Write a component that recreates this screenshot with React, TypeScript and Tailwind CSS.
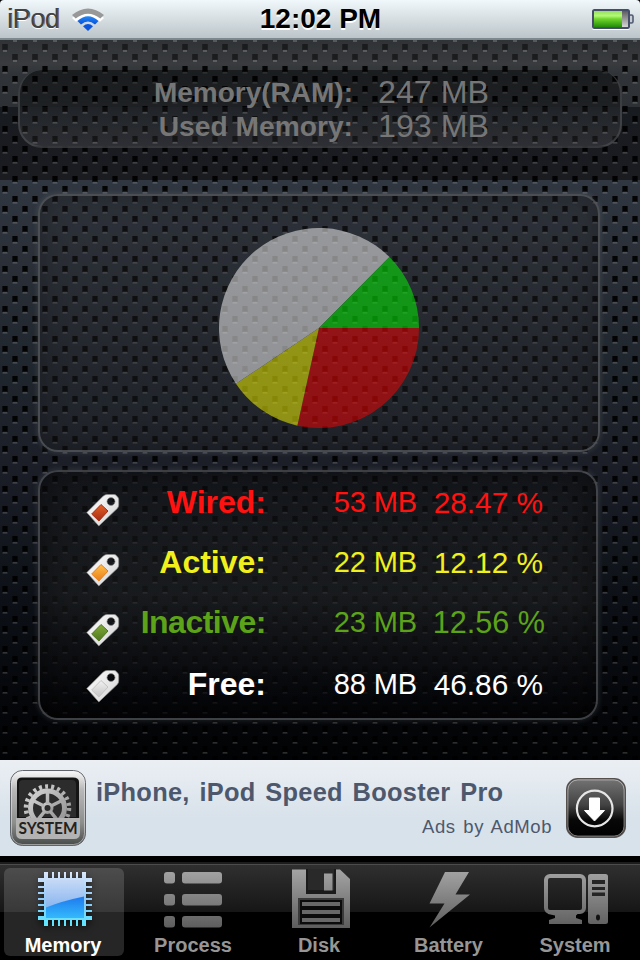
import type { ReactNode } from 'react';

interface Segment {
  name: string;
  size: string;
  percent: string;
  share: number;
  pie: string;
  text: string;
  tag: [string, string];
  rowClass: string;
  iconClass: string;
  nameClass: string;
  percentClass: string;
}

const segments: Segment[] = [
  {
    name: 'Wired:',
    size: '53 MB',
    percent: '28.47 %',
    share: 28.47,
    pie: '#ff0000',
    text: 'text-[#ff120f]',
    tag: ['#e2622a', '#a82a10'],
    rowClass: 'h-[60px]',
    iconClass: 'mt-[14px]',
    nameClass: '',
    percentClass: 'w-[126px] mt-px text-[29.8px]',
  },
  {
    name: 'Active:',
    size: '22 MB',
    percent: '12.12 %',
    share: 12.12,
    pie: '#ffff00',
    text: 'text-[#f0f01c]',
    tag: ['#ffc04a', '#e87c18'],
    rowClass: 'h-[60px]',
    iconClass: 'mt-[14px]',
    nameClass: '',
    percentClass: 'w-[126px] mt-px text-[29.8px]',
  },
  {
    name: 'Inactive:',
    size: '23 MB',
    percent: '12.56 %',
    share: 12.56,
    pie: '#00ff00',
    text: 'text-[#5da31a]',
    tag: ['#82ab3c', '#4f761c'],
    rowClass: 'h-[62px]',
    iconClass: 'mt-[14px]',
    nameClass: 'tracking-[-0.5px]',
    percentClass: 'w-[128px] text-[30.6px]',
  },
  {
    name: 'Free:',
    size: '88 MB',
    percent: '46.86 %',
    share: 46.86,
    pie: '#ffffff',
    text: 'text-white',
    tag: ['#f2f2f2', '#c4c4c4'],
    rowClass: 'h-[60px]',
    iconClass: 'mt-[8px]',
    nameClass: '',
    percentClass: 'w-[126px] mt-px text-[29.8px]',
  },
];

// Slices run clockwise from 3 o'clock
const pieOrder = [segments[0], segments[1], segments[3], segments[2]];

function PieChart() {
  let angle = 0;
  const point = (a: number) => `${100 + 100 * Math.cos(a)} ${100 + 100 * Math.sin(a)}`;

  return (
    <svg width="200" height="200" viewBox="0 0 200 200" className="opacity-50">
      {pieOrder.map((s) => {
        const start = angle;
        angle += (s.share / 100) * Math.PI * 2;
        return <path key={s.name} d={`M100 100L${point(start)}A100 100 0 0 1 ${point(angle)}Z`} fill={s.pie} />;
      })}
    </svg>
  );
}

/* Perforated metal backdrop */
function Perforation() {
  return (
    <svg className="absolute inset-0" width="640" height="720">
      <defs>
        <g id="hole">
          <rect x="0" y="6" width="6" height="2" fill="#fff" opacity=".05" />
          <rect x="1" y="6" width="4" height="1.500" fill="#fff" opacity=".12" />
          <rect width="6" height="6" fill="#000" opacity=".6" />
          <rect x="1" width="4" height="5" fill="#000" opacity=".8" />
        </g>
        <g id="hole-top">
          <rect x="1" y="6" width="4" height="2" fill="#fff" opacity=".18" />
          <rect width="6" height="6" fill="#121314" opacity=".6" />
          <rect x="1" width="4" height="5" fill="#18191a" opacity=".7" />
        </g>
        <pattern id="holes" width="20" height="20" x="0" y="26" patternUnits="userSpaceOnUse">
          <use href="#hole" x="2" y="0" />
          <use href="#hole" x="12" y="10" />
        </pattern>
        <pattern id="holes-top" width="20" height="20" x="0" y="4" patternUnits="userSpaceOnUse">
          <use href="#hole-top" x="2" y="0" />
          <use href="#hole-top" x="12" y="10" />
        </pattern>
      </defs>
      <rect width="640" height="24" fill="url(#holes-top)" />
      <rect y="26" width="640" height="694" fill="url(#holes)" />
    </svg>
  );
}

function StatusBar() {
  return (
    <header className="h-10 bg-black">
      <div className="h-10 rounded-t-[4px] border-b-2 border-[#7d888e] bg-linear-to-b from-[#f1f8fc] to-[#bcc5c9] flex items-center justify-between pl-[7px] pr-[6px]">
        <div className="flex items-center w-[240px]">
          <span className="w-[52px] text-[27px] leading-[38px] tracking-[-0.4px] text-[#434343] [text-shadow:0_1px_0_#fff,0.8px_0_0_#434343]">
            iPod
          </span>
          <svg width="34" height="26" viewBox="0 0 34 26" className="ml-[12px] mt-[2px]">
            <defs>
              <linearGradient id="wifi" x1="0" y1="0" x2="0" y2="1">
                <stop offset="0" stopColor="#2388f4" />
                <stop offset="1" stopColor="#0650dc" />
              </linearGradient>
            </defs>
            <path d="M1 9.500Q17-5 33 9.500L29 13.300Q17 2.500 5 13.300Z" fill="#fff" transform="translate(0 1.500)" />
            <path d="M1 8Q17-5 33 8L29.300 11.500Q17 2 4.700 11.500Z" fill="#989898" />
            <path d="M6.500 14Q17 4.500 27.500 14L24 17.500Q17 11.500 10 17.500Z" fill="url(#wifi)" />
            <path d="M12 19.200Q17 15 22 19.200L17 24Z" fill="#0b55dc" />
          </svg>
        </div>
        <span className="w-[150px] text-center font-bold text-[28px] leading-[38px] text-black whitespace-nowrap [text-shadow:0_1.5px_0_#fff]">
          12:02 PM
        </span>
        <div className="flex justify-end w-[240px]">
          <svg width="42" height="22" viewBox="0 0 42 22">
            <defs>
              <linearGradient id="charge" x1="0" y1="0" x2="0" y2="1">
                <stop offset="0" stopColor="#93df5c" />
                <stop offset=".3" stopColor="#b4fa78" />
                <stop offset=".5" stopColor="#6fd52c" />
                <stop offset="1" stopColor="#238c08" />
              </linearGradient>
              <linearGradient id="drained" x1="0" y1="0" x2="0" y2="1">
                <stop offset="0" stopColor="#555" />
                <stop offset="1" stopColor="#ddd" />
              </linearGradient>
            </defs>
            <rect x="0" y="2" width="38" height="20" rx="2" fill="#fff" />
            <rect x="37" y="7" width="4" height="8" rx="1.500" fill="#c8ced6" stroke="#515b70" strokeWidth="1.600" />
            <rect x="1" y="2" width="36" height="18" rx="1.500" fill="url(#drained)" stroke="#454e69" strokeWidth="2" />
            <rect x="2" y="3" width="28" height="16" fill="url(#charge)" />
          </svg>
        </div>
      </div>
    </header>
  );
}

function TagIcon({ id, colors, className }: { id: string; colors: [string, string]; className: string }) {
  return (
    <svg width="34" height="34" viewBox="0 0 34 34" className={className}>
      <defs>
        <linearGradient id={`tag-${id}`} x1="0" y1="0" x2="0" y2="1">
          <stop offset="0" stopColor={colors[0]} />
          <stop offset="1" stopColor={colors[1]} />
        </linearGradient>
        <linearGradient id={`paper-${id}`} x1="0" y1="0" x2="1" y2="1">
          <stop offset="0" stopColor="#fff" />
          <stop offset="1" stopColor="#d2d2d2" />
        </linearGradient>
      </defs>
      <path
        fillRule="evenodd"
        d="M.8 18.500L17.300 2Q19 .5 21 .5H28Q29.500.5 30.500 1.700L32 3.400Q32.700 4.200 32.700 5.500V11Q32.700 13 31.300 14.400L12.800 32ZM25 3.500a4 4 0 1 0 .01 0Z"
        fill={`url(#paper-${id})`}
        stroke="#8d8d8d"
        strokeWidth=".7"
      />
      <path d="M15 10.500L22 17L12.900 27L5.700 20Z" fill={`url(#tag-${id})`} stroke={colors[1]} strokeWidth="1" strokeLinejoin="round" />
    </svg>
  );
}

function SystemAppIcon() {
  return (
    <svg width="76" height="76" viewBox="0 0 76 76">
      <defs>
        <linearGradient id="frame" x1="0" y1="0" x2="0" y2="1">
          <stop offset="0" stopColor="#fafafa" />
          <stop offset=".25" stopColor="#b9b9b9" />
          <stop offset=".7" stopColor="#8c8e8c" />
          <stop offset="1" stopColor="#464a48" />
        </linearGradient>
        <linearGradient id="gear" x1="0" y1="0" x2="1" y2="1">
          <stop offset="0" stopColor="#d4d4d4" />
          <stop offset="1" stopColor="#8f8f8f" />
        </linearGradient>
        <clipPath id="window">
          <path d="M9 12Q9 8 13 8H63Q67 8 67 12V48H9Z" />
        </clipPath>
      </defs>
      <rect x=".5" y=".5" width="75" height="75" rx="12" fill="url(#frame)" stroke="#60636a" />
      <rect x="1.500" y="1.500" width="73" height="73" rx="11" fill="none" stroke="#eee" strokeOpacity=".5" />
      <path d="M7 12Q7 7.500 12 7.500H63Q69 7.500 69 12V48H7Z" fill="#141414" />
      <path d="M9 14Q9 10 13 10H62Q66 10 66 14V47H9Z" fill="#2c2c2c" />
      <g clipPath="url(#window)" fill="none" stroke="url(#gear)">
        <circle cx="37.500" cy="38" r="21.500" strokeWidth="4.500" strokeDasharray="3 3.140" />
        <circle cx="37.500" cy="38" r="17" strokeWidth="5" />
        <circle cx="37.500" cy="38" r="4.500" strokeWidth="3" />
        <path d="M37.500 34V21M34 36L22 30M41 36L53 30M35 41L26 52M40 41L49 52" strokeWidth="3.500" />
      </g>
      <path d="M6 48H70V63Q70 69 64 69H12Q6 69 6 63Z" fill="#b3b3b3" />
      <text
        x="38"
        y="64"
        textAnchor="middle"
        textLength="59"
        lengthAdjust="spacingAndGlyphs"
        fontSize="17.500"
        fontFamily="Lato, 'Open Sans', sans-serif"
        fontWeight="bold"
        fill="#222"
      >
        SYSTEM
      </text>
    </svg>
  );
}

function DownloadIcon() {
  return (
    <svg width="60" height="60" viewBox="0 0 60 60">
      <defs>
        <linearGradient id="download" x1="0" y1="0" x2="0" y2="1">
          <stop offset="0" stopColor="#747474" />
          <stop offset=".45" stopColor="#424242" />
          <stop offset=".7" stopColor="#080808" />
          <stop offset="1" stopColor="#000" />
        </linearGradient>
      </defs>
      <rect x=".7" y=".7" width="58.600" height="58.600" rx="11" fill="url(#download)" stroke="#55504e" strokeWidth="1.400" />
      <rect x="1.900" y="1.900" width="56.200" height="56.200" rx="10" fill="none" stroke="#ddd" strokeOpacity=".65" strokeWidth=".9" />
      <circle cx="28.700" cy="30.500" r="17.800" fill="none" stroke="#e6e6e6" strokeWidth="2.200" />
      <path d="M23.500 20H33.500V32.500H38.500L28.500 43L18.500 32.500H23.500Z" fill="#fff" stroke="#fff" strokeLinejoin="round" />
    </svg>
  );
}

function AdBanner() {
  return (
    <a className="h-24 shrink-0 flex bg-linear-to-b from-[#ebeff4] to-[#d8e2ea] to-60% text-[#4d586d]">
      <div className="pl-[10px] pt-[10px]">
        <SystemAppIcon />
      </div>
      <div className="w-[466px] pl-[10px] pt-[16px]">
        <p className="font-bold text-[25.4px] leading-8 tracking-[0.28px] [word-spacing:2.4px] whitespace-nowrap">iPhone, iPod Speed Booster Pro</p>
        <p className="text-right text-[18.5px] leading-6 mt-[7px] tracking-[0.55px] [word-spacing:2px]">Ads by AdMob</p>
      </div>
      <div className="pl-[14px] pt-[18px]">
        <DownloadIcon />
      </div>
    </a>
  );
}

// Offset and width of each pin along one side of the chip
const pins = [
  [0, 4],
  [8, 2],
  [14, 2],
  [20, 2],
  [26, 2],
  [32, 2],
  [38, 4],
];

function ChipIcon() {
  return (
    <svg width="60" height="60" viewBox="34 869 60 60" className="drop-shadow-[0_3px_3px_rgba(0,0,0,0.6)]">
      <defs>
        <linearGradient id="pins" gradientUnits="userSpaceOnUse" x1="0" y1="872" x2="0" y2="926">
          <stop offset="0" stopColor="#dbe8fb" />
          <stop offset=".5" stopColor="#8fc8fa" />
          <stop offset="1" stopColor="#5ce8ff" />
        </linearGradient>
        <linearGradient id="die" x1="0" y1="0" x2="0" y2="1">
          <stop offset="0" stopColor="#c5d9f6" />
          <stop offset="1" stopColor="#72a8ec" />
        </linearGradient>
        <linearGradient id="die-low" x1="0" y1="0" x2="0" y2="1">
          <stop offset="0" stopColor="#1e79ef" />
          <stop offset="1" stopColor="#34b9fb" />
        </linearGradient>
      </defs>
      <g fill="url(#pins)">
        <rect x="44" y="878" width="42" height="42" />
        {pins.map(([at, w]) => (
          <g key={at}>
            <rect x={44 + at} y="872" width={w} height="6" />
            <rect x={44 + at} y="920" width={w} height="6" />
            <rect x="38" y={878 + at} width="6" height={w} />
            <rect x="86" y={878 + at} width="6" height={w} />
          </g>
        ))}
      </g>
      <rect x="46" y="880" width="38" height="38" fill="url(#die)" />
      <path d="M46 907.500Q62 901 84 896.500V918H46Z" fill="url(#die-low)" />
    </svg>
  );
}

function ProcessIcon() {
  return (
    <svg width="60" height="60" viewBox="162 869 60 60" fill="url(#tab-gray)">
      {[872, 894, 916].map((y) => (
        <g key={y}>
          <rect x="164" y={y} width="11" height="11.500" rx="3" />
          <rect x="182" y={y} width="40" height="11.500" rx="3" />
        </g>
      ))}
    </svg>
  );
}

function DiskIcon() {
  return (
    <svg width="60" height="60" viewBox="290 869 60 60">
      <path d="M292 869.500H340L350 879V928H292Z" fill="url(#tab-gray)" />
      <path d="M306 869H336V894H306Z" fill="#1b1b1b" />
      <rect x="308" y="869" width="26" height="21" fill="#292929" />
      <rect x="324" y="873.500" width="8.500" height="17" fill="url(#tab-gray)" />
      <rect x="298" y="898" width="46" height="27" fill="#3a3a3a" />
      <rect x="300" y="900" width="42" height="24" fill="#0b0b0b" />
      <path d="M302 902H340V906H302ZM302 910H340V914H302ZM302 918H340V922H302Z" fill="#686868" />
    </svg>
  );
}

function BoltIcon() {
  return (
    <svg width="60" height="60" viewBox="418 869 60 60">
      <path d="M445 872H469L455.500 894.500H470L429.500 927.500L444.500 903.500H429.500Z" fill="url(#tab-gray)" />
    </svg>
  );
}

function ComputerIcon() {
  return (
    <svg width="68" height="60" viewBox="542 869 68 60">
      <rect x="546" y="876" width="38" height="36" rx="4" fill="none" stroke="url(#tab-gray)" strokeWidth="4" />
      <path d="M548 910H582L576 915.500V918L582 920V924H549V920L555 918V915.500L548 914Z" fill="url(#tab-gray)" />
      <rect x="588" y="874" width="20" height="50" rx="2.500" fill="url(#tab-gray)" />
      <path d="M592 880H605V884H592ZM592 887H605V890H592ZM592 892.500H605V896H592Z" fill="#252525" />
      <ellipse cx="598" cy="917.500" rx="2" ry="3" fill="#111" />
    </svg>
  );
}

interface TabProps {
  label: string;
  active?: boolean;
  labelClass?: string;
  children: ReactNode;
}

function Tab({ label, active = false, labelClass = '', children }: TabProps) {
  return (
    <button
      type="button"
      className={`w-[120px] h-[88px] rounded-[6px] flex flex-col items-center ${active ? 'bg-white/15 text-white' : 'text-[#969696]'}`}
    >
      <span className="h-[60px] mt-px">{children}</span>
      <span className={`font-bold text-[20px] leading-[24px] mt-[4px] ${labelClass}`}>{label}</span>
    </button>
  );
}

function TabBar() {
  return (
    <nav className="h-[98px] mt-[6px] shrink-0 border-t-2 border-[#1c1c1c] bg-[linear-gradient(#4c4c4c_0,#4c4c4c_1.5px,#2f2f2f_1.5px,#161616_48px,#000_48px)]">
      {/* Shared fade for the inactive icons */}
      <svg width="0" height="0" className="absolute">
        <linearGradient id="tab-gray" gradientUnits="userSpaceOnUse" x1="0" y1="869" x2="0" y2="929">
          <stop offset="0" stopColor="#a5a5a5" />
          <stop offset="1" stopColor="#5c5c5c" />
        </linearGradient>
      </svg>
      <div className="flex gap-2 pt-[4px] pl-[4px]">
        <Tab label="Memory" active labelClass="pr-[2px]">
          <ChipIcon />
        </Tab>
        <Tab label="Process" labelClass="pl-[2px]">
          <ProcessIcon />
        </Tab>
        <Tab label="Disk" labelClass="pr-[2px]">
          <DiskIcon />
        </Tab>
        <Tab label="Battery" labelClass="pl-px">
          <BoltIcon />
        </Tab>
        <Tab label="System" labelClass="pr-[2px]">
          <ComputerIcon />
        </Tab>
      </div>
    </nav>
  );
}

function App() {
  return (
    <div className="w-[640px] h-[960px] bg-black flex flex-col overflow-hidden font-['Liberation_Sans',Arial,sans-serif]">
      <StatusBar />

      <main className="relative h-[720px] shrink-0 bg-[linear-gradient(#303336_0,#393b3e_24px,#303438_34px,#2d3135_67px,#181b20_67px,#1b1c20_140px,#303740_140px,#2b3039_210px,#20262d_330px,#1c1f28_420px,#0d1117_560px,#05070b_660px,#020304_720px)]">
        <Perforation />

        <div className="relative pt-[30px]">
          {/* Totals */}
          <section className="ml-[18px] w-[604px] h-[78px] rounded-[24px] border-2 border-t-0 border-[#515356]/60 bg-[linear-gradient(rgba(0,0,0,0.46)_0,rgba(0,0,0,0.32)_37px,rgba(255,255,255,0.04)_37px,rgba(255,255,255,0.09)_100%)] grid grid-cols-[333px_1fr] gap-x-[25px] content-start pt-[5px] text-[#767676]">
            <span className="text-right font-bold text-[28px] leading-[34px] pt-px -mb-px">Memory(RAM):</span>
            <span className="text-[32.2px] leading-[34px]">247 MB</span>
            <span className="text-right font-bold text-[28.2px] leading-[34px]">Used Memory:</span>
            <span className="text-[32.2px] leading-[34px]">193 MB</span>
          </section>

          {/* Usage chart */}
          <section className="ml-[38px] mt-[46px] w-[562px] h-[258px] rounded-[20px] border-2 border-[#54575b]/80 bg-[#2a2c2e]/30 shadow-[0_0_4px_2px_rgba(120,125,130,0.18),inset_0_0_28px_rgba(0,0,0,0.25)] pt-[32px] pl-[179px]">
            <PieChart />
          </section>

          {/* Breakdown */}
          <section className="ml-[38px] mt-[18px] w-[560px] h-[250px] rounded-[20px] border-2 border-[#54575b]/70 bg-linear-to-b from-[#131416]/50 via-[#202122]/60 to-[#050507]/60 shadow-[0_0_4px_2px_rgba(120,125,130,0.16),inset_0_0_40px_rgba(0,0,0,0.5)] pt-[8px] pl-[46px]">
            {segments.map((s) => (
              <div key={s.name} className={`flex leading-[44px] ${s.text} ${s.rowClass}`}>
                <TagIcon id={s.name.replace(':', '')} colors={s.tag} className={s.iconClass} />
                <span className={`w-[146px] text-right font-bold text-[32px] ${s.nameClass}`}>{s.name}</span>
                <span className="w-[151px] text-right text-[29px] tracking-[-0.1px]">{s.size}</span>
                <span className={`text-right ${s.percentClass}`}>{s.percent}</span>
              </div>
            ))}
          </section>
        </div>
      </main>

      <AdBanner />
      <TabBar />
    </div>
  );
}

export default App;
